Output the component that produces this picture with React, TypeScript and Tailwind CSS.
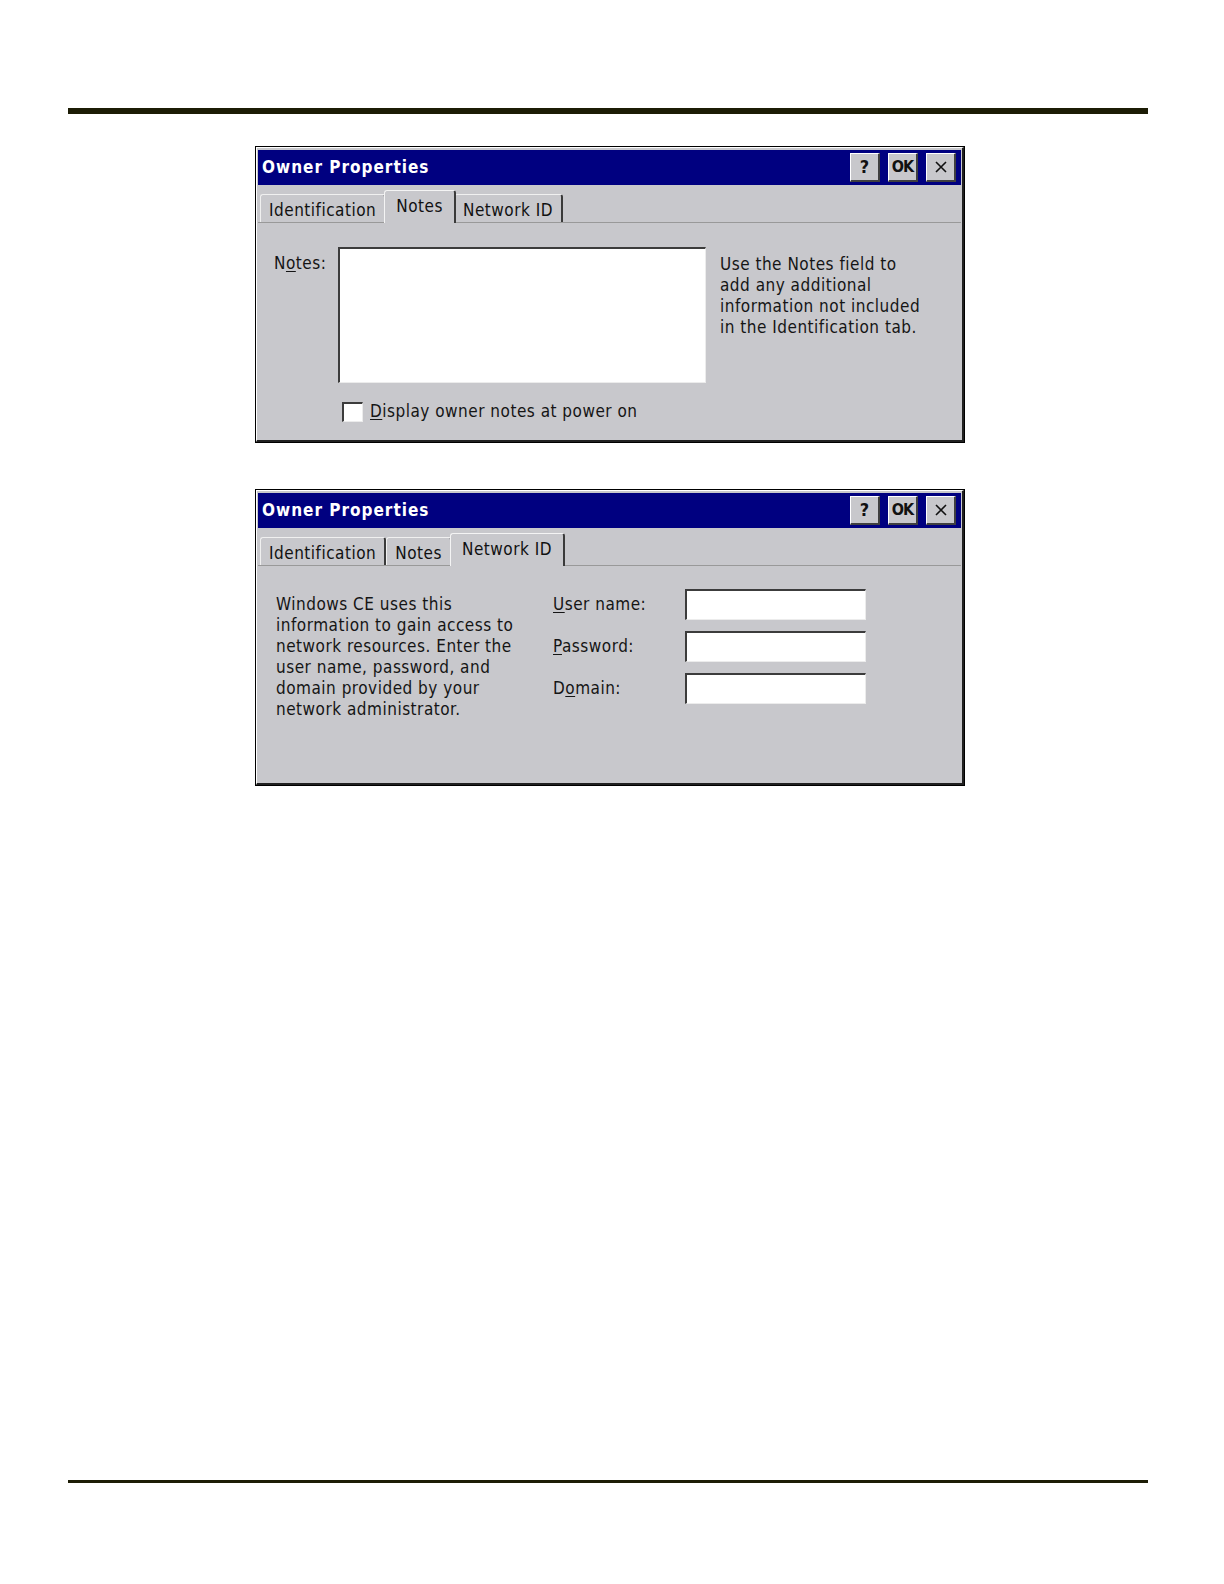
import React from "react";

const font = "font-['DejaVu_Sans_Condensed','DejaVu_Sans',sans-serif]";

function TitleButton({ children }: { children: React.ReactNode }) {
  return (
    <div className="w-[30px] h-[29px] bg-[#c8c8cc] border-t border-l border-white border-r-2 border-b-2 border-r-[#404040] border-b-[#404040] flex items-center justify-center text-[#111] font-bold text-[18px] leading-none">
      {children}
    </div>
  );
}

function Tab({ label, active }: { label: React.ReactNode; active?: boolean }) {
  if (active) {
    return (
      <div className="relative z-10 -mb-px -mx-[2px] h-[33px] px-[11px] pt-[3px] bg-[#c8c8cc] border-t border-l border-[#f4f4f4] border-r-2 border-r-[#3a3a3a] rounded-t-[3px] text-[17px] text-[#111]">
        {label}
      </div>
    );
  }
  return (
    <div className="h-[28px] px-[8px] pt-[4px] bg-[#c8c8cc] border-t border-l border-[#f0f0f0] border-r-2 border-r-[#3a3a3a] rounded-t-[3px] text-[17px] text-[#111] leading-[22px]">
      {label}
    </div>
  );
}

function Dialog({ active, children }: { active: "notes" | "network"; children: React.ReactNode }) {
  return (
    <div className="w-[710px] h-[297px] border border-black bg-[#c8c8cc]">
      <div className="h-full flex flex-col border-t border-l border-white border-r-2 border-b-2 border-r-[#202020] border-b-[#202020] pt-[2px] px-[1px]">
        <div className="h-[35px] shrink-0 bg-[#000080] flex items-center justify-between pl-[4px] pr-[5px]">
          <span className="text-white font-bold text-[17px] tracking-[1px]">Owner Properties</span>
          <div className="flex items-center gap-[8px]">
            <TitleButton>?</TitleButton>
            <TitleButton>
              <span className="text-[16px] tracking-[-1px]">OK</span>
            </TitleButton>
            <TitleButton>
              <svg width="14" height="14" viewBox="0 0 14 14">
                <path d="M2 2 L12 12 M12 2 L2 12" stroke="#111" strokeWidth="1.6" />
              </svg>
            </TitleButton>
          </div>
        </div>
        <div className="h-[38px] shrink-0 flex items-end pl-[2px] border-b border-[#999] tracking-[0.5px]">
          <Tab label="Identification" />
          <Tab label="Notes" active={active === "notes"} />
          <Tab label="Network ID" active={active === "network"} />
        </div>
        <div className="flex-1 text-[17px] text-[#151515] leading-[21px] tracking-[0.5px]">{children}</div>
      </div>
    </div>
  );
}

function Sunken({ className }: { className: string }) {
  return (
    <div
      className={
        "bg-white border-t-2 border-l-2 border-t-[#3c3c3c] border-l-[#3c3c3c] border-b border-r border-b-[#ececec] border-r-[#ececec] " +
        className
      }
    />
  );
}

export default function App() {
  return (
    <div className={"w-[1224px] h-[1584px] bg-white flex flex-col " + font}>
      <div className="mt-[108px] ml-[68px] w-[1080px] h-[6px] bg-[#1c1c05]" />

      <div className="mt-[32px] ml-[255px]">
        <Dialog active="notes">
          <div className="pt-[24px] pl-[16px]">
            <div className="flex">
              <div className="w-[64px] pt-[6px]">
                N<span className="underline underline-offset-2">o</span>tes:
              </div>
              <Sunken className="w-[368px] h-[136px]" />
              <div className="ml-[14px] pt-[7px] whitespace-nowrap">
                Use the Notes field to
                <br />
                add any additional
                <br />
                information not included
                <br />
                in the Identification tab.
              </div>
            </div>
            <div className="flex items-center mt-[18px] ml-[4px] pl-[64px]">
              <Sunken className="w-[21px] h-[20px]" />
              <span className="ml-[7px]">
                <span className="underline underline-offset-2">D</span>isplay owner notes at power on
              </span>
            </div>
          </div>
        </Dialog>
      </div>

      <div className="mt-[46px] ml-[255px]">
        <Dialog active="network">
          <div className="flex pl-[18px]">
            <div className="w-[277px] pt-[28px] whitespace-nowrap">
              Windows CE uses this
              <br />
              information to gain access to
              <br />
              network resources. Enter the
              <br />
              user name, password, and
              <br />
              domain provided by your
              <br />
              network administrator.
            </div>
            <div className="pt-[23px] flex flex-col gap-[11px]">
              {[
                ["U", "ser name:"],
                ["P", "assword:"],
                ["Do", "main:"],
              ].map(([a, b], i) => (
                <div key={i} className="flex items-center h-[31px]">
                  <div className="w-[132px]">
                    {a.length === 2 ? (
                      <>
                        D<span className="underline underline-offset-2">o</span>
                      </>
                    ) : (
                      <span className="underline underline-offset-2">{a}</span>
                    )}
                    {b}
                  </div>
                  <Sunken className="w-[181px] h-[31px]" />
                </div>
              ))}
            </div>
          </div>
        </Dialog>
      </div>

      <div className="mt-auto mb-[101px] ml-[68px] w-[1080px] h-[3px] bg-[#1c1c05]" />
    </div>
  );
}
